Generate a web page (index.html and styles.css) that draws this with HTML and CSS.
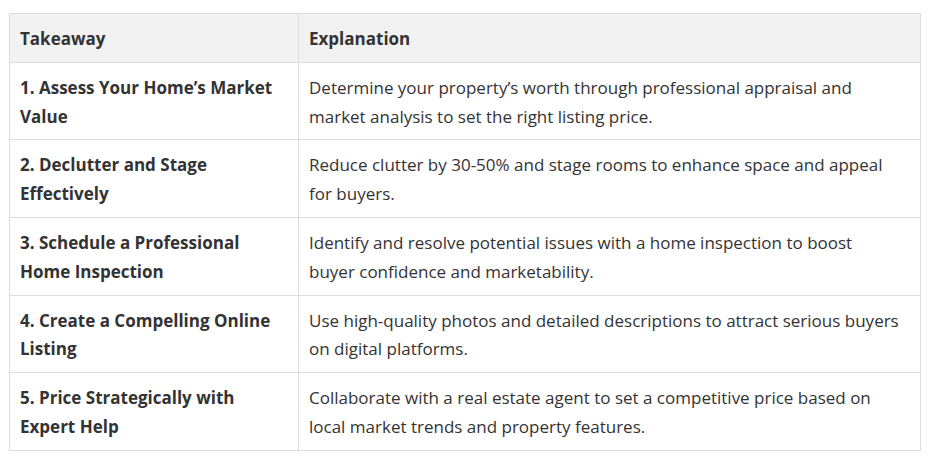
FILE: index.html
```html
<!DOCTYPE html>
<html lang="en">
<head>
<meta charset="utf-8">
<title>Home Selling Takeaways</title>
<link rel="stylesheet" href="styles.css">
</head>
<body>
<div class="wrap">
  <table class="takeaways">
    <thead>
      <tr><th class="col-a">Takeaway</th><th class="col-b">Explanation</th></tr>
    </thead>
    <tbody>
      <tr><td class="key">1. Assess Your Home’s Market Value</td><td class="col-b">Determine your property’s worth through professional appraisal and market analysis to set the right listing price.</td></tr>
      <tr><td class="key">2. Declutter and Stage Effectively</td><td class="col-b">Reduce clutter by 30-50% and stage rooms to enhance space and appeal for buyers.</td></tr>
      <tr><td class="key">3. Schedule a Professional Home Inspection</td><td class="col-b">Identify and resolve potential issues with a home inspection to boost buyer confidence and marketability.</td></tr>
      <tr><td class="key">4. Create a Compelling Online Listing</td><td class="col-b">Use high-quality photos and detailed descriptions to attract serious buyers on digital platforms.</td></tr>
      <tr><td class="key">5. Price Strategically with Expert Help</td><td class="col-b">Collaborate with a real estate agent to set a competitive price based on local market trends and property features.</td></tr>
    </tbody>
  </table>
</div>
</body>
</html>
```
FILE: styles.css
```css
html, body {
  margin: 0;
  padding: 0;
  background: #ffffff;
}
.wrap {
  padding: 13px 0 0 9px;
}
.takeaways {
  border-collapse: collapse;
  width: 912px;
  table-layout: fixed;
  font-family: "Open Sans", "Noto Sans", sans-serif;
  font-size: 17px;
  line-height: 28.8px;
  color: #333333;
}
.takeaways th,
.takeaways td {
  border: 1px solid #dddddd;
  padding: 11px 10px 8px;
  text-align: left;
  vertical-align: top;
}
.takeaways th {
  background: #f2f2f2;
  font-weight: 700;
}
.takeaways .col-a {
  width: 268px;
}
.takeaways .col-b {
  padding-right: 20px;
}
.takeaways .key {
  font-weight: 700;
}
```
